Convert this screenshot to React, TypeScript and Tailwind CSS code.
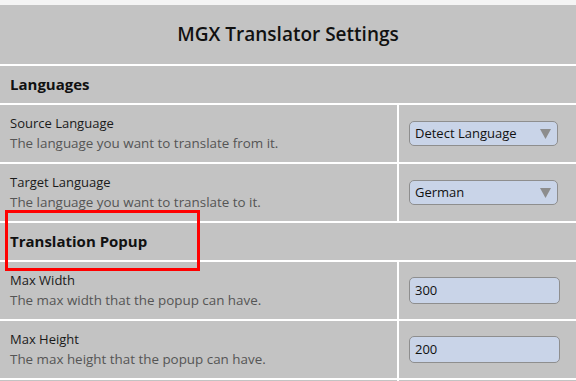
import React from 'react';

const font = { fontFamily: '"Open Sans", "Noto Sans", sans-serif' };

type Row = { label: string; desc: string; kind: 'select' | 'input'; value: string };

const languageRows: Row[] = [
  { label: 'Source Language', desc: 'The language you want to translate from it.', kind: 'select', value: 'Detect Language' },
  { label: 'Target Language', desc: 'The language you want to translate to it.', kind: 'select', value: 'German' },
];

const popupRows: Row[] = [
  { label: 'Max Width', desc: 'The max width that the popup can have.', kind: 'input', value: '300' },
  { label: 'Max Height', desc: 'The max height that the popup can have.', kind: 'input', value: '200' },
];

const Section: React.FC<{ title: string }> = ({ title }) => (
  <div className="col-span-2 flex h-[37px] items-center bg-[#c3c3c3] pl-[10px] text-[15px] font-bold text-[#111]">
    {title}
  </div>
);

const SettingRow: React.FC<{ row: Row }> = ({ row }) => (
  <>
    <div className="flex h-[57px] flex-col justify-center bg-[#c3c3c3] pl-[10px]">
      <span className="text-[13px] leading-[20px] text-[#1a1a1a]">{row.label}</span>
      <span className="text-[13.4px] leading-[21px] text-[#555]">{row.desc}</span>
    </div>
    <div className="flex items-center bg-[#c3c3c3] pl-[10px]">
      {row.kind === 'select' ? (
        <div className="flex h-[25px] w-[149px] items-center justify-between rounded-[5px] border border-[#8e8e8e] bg-[#c9d4e8] pl-[5px] pr-[6px] text-[13px] text-[#111]">
          <span>{row.value}</span>
          <svg width="11" height="10" viewBox="0 0 11 10">
            <polygon points="0,0 11,0 5.5,10" fill="#8d8d8d" />
          </svg>
        </div>
      ) : (
        <div className="flex h-[27px] w-[151px] items-center rounded-[5px] border border-[#8e8e8e] bg-[#c9d4e8] pl-[5px] text-[13px] text-[#111]">
          {row.value}
        </div>
      )}
    </div>
  </>
);

const App: React.FC = () => {
  return (
    <div className="relative h-[381px] w-[576px] overflow-hidden bg-[#f4f4f4] pt-[5px]" style={font}>
      <div className="grid grid-cols-[397px_1fr] gap-[2px] bg-white">
        <div className="col-span-2 flex h-[59px] items-center justify-center bg-[#c3c3c3] text-[19px] font-semibold text-[#111]">
          MGX Translator Settings
        </div>
        <Section title="Languages" />
        {languageRows.map((r) => (
          <SettingRow key={r.label} row={r} />
        ))}
        <Section title="Translation Popup" />
        {popupRows.map((r) => (
          <SettingRow key={r.label} row={r} />
        ))}
        {/* next row, cut off by the window */}
        <div className="h-[57px] bg-[#c3c3c3]" />
        <div className="bg-[#c3c3c3]" />
      </div>
      {/* annotation box */}
      <div className="pointer-events-none absolute left-[5px] top-[210px] h-[61px] w-[195px] border-[3px] border-[#ff0000]" />
    </div>
  );
};

export default App;
